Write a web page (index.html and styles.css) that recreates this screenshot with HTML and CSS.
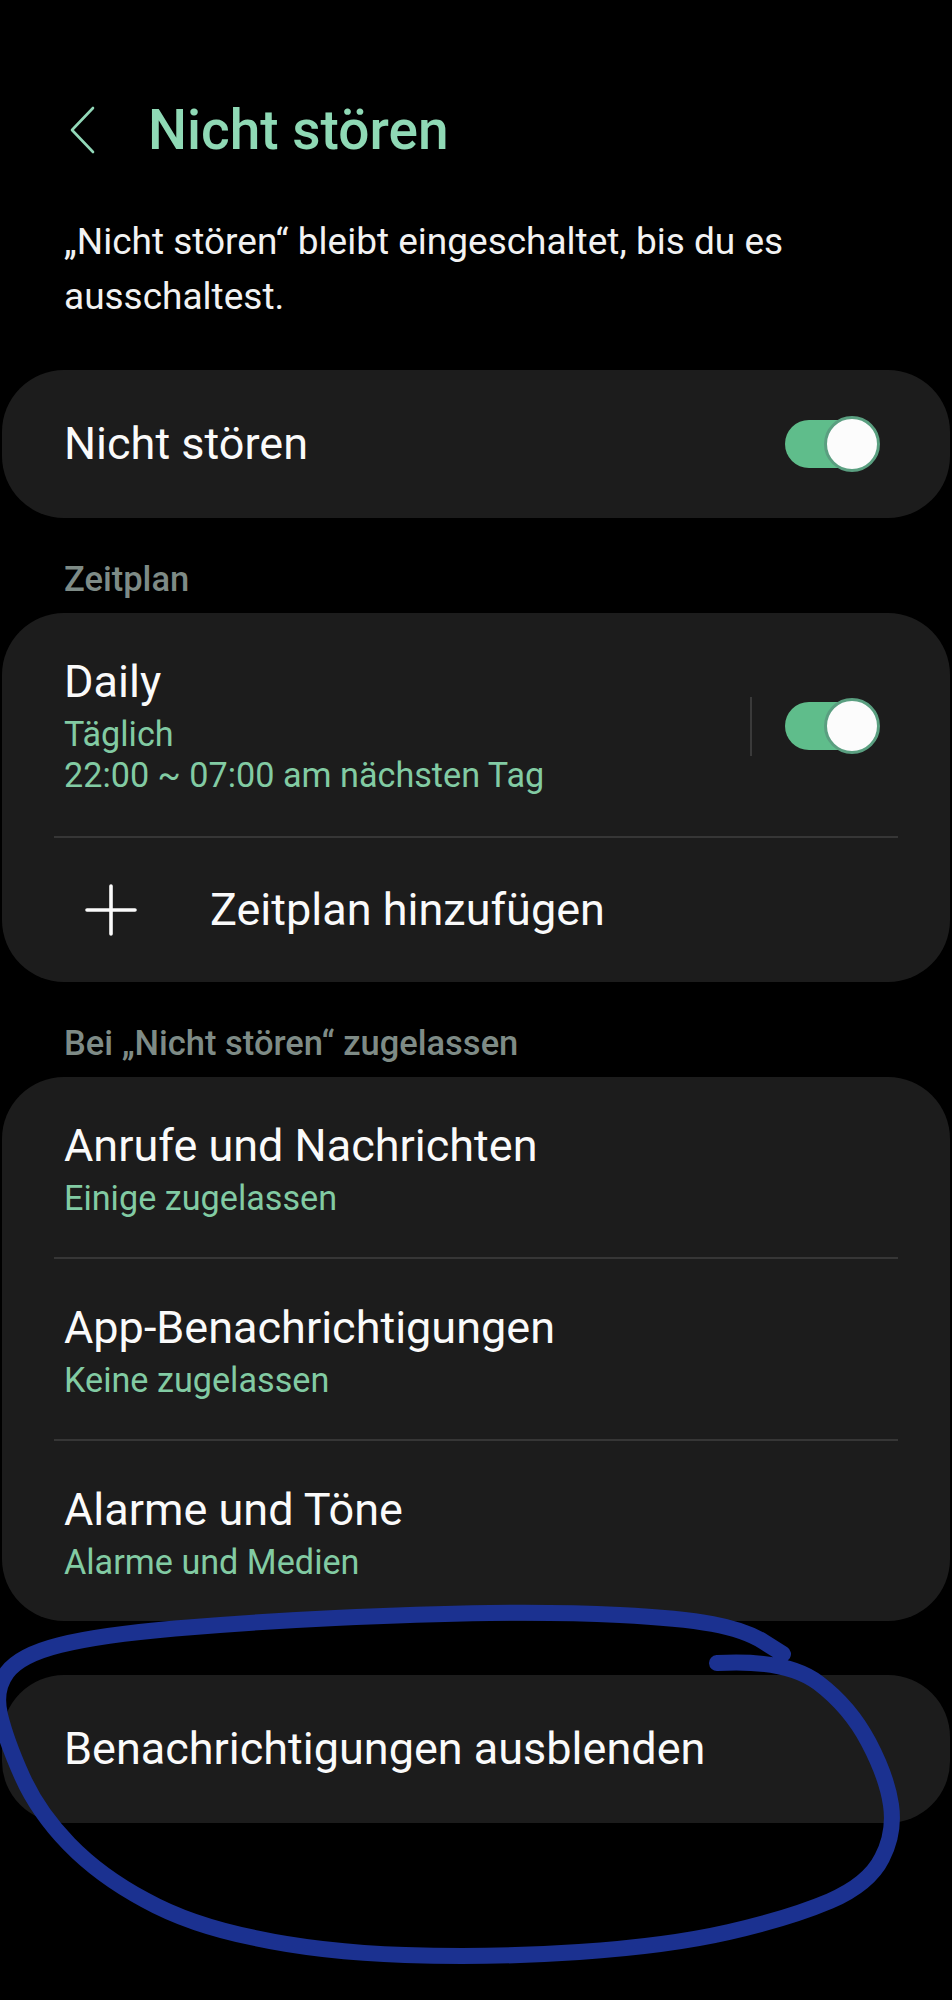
FILE: index.html
```html
<!DOCTYPE html>
<html lang="de">
<head>
  <meta charset="UTF-8">
  <meta name="viewport" content="width=device-width, initial-scale=1.0">
  <title>Nicht stören</title>
  <link rel="stylesheet" href="styles.css">
</head>
<body>
  <div class="screen">
    <header class="app-bar">
      <svg class="back" viewBox="0 0 26 48" width="26" height="48" aria-hidden="true">
        <path d="M24 2 L3 24 L24 46" fill="none" stroke="currentColor" stroke-width="2.6" stroke-linecap="round" stroke-linejoin="round"/>
      </svg>
      <h1>Nicht stören</h1>
    </header>

    <p class="intro">„Nicht stören“ bleibt eingeschaltet, bis du es ausschaltest.</p>

    <section class="card card-single">
      <span class="item-title">Nicht stören</span>
      <span class="switch"></span>
    </section>

    <h2 class="section-label">Zeitplan</h2>
    <section class="card">
      <div class="row row-schedule">
        <div class="row-text">
          <div class="item-title">Daily</div>
          <div class="item-sub">Täglich<br>22:00 ~ 07:00 am nächsten Tag</div>
        </div>
        <span class="vline"></span>
        <span class="switch"></span>
      </div>
      <div class="divider"></div>
      <div class="row row-add">
        <svg class="plus" viewBox="0 0 56 56" width="56" height="56" aria-hidden="true">
          <path d="M28 4 V52 M4 28 H52" fill="none" stroke="currentColor" stroke-width="3.6" stroke-linecap="round"/>
        </svg>
        <span class="item-title">Zeitplan hinzufügen</span>
      </div>
    </section>

    <h2 class="section-label">Bei „Nicht stören“ zugelassen</h2>
    <section class="card">
      <div class="row">
        <div class="row-text">
          <div class="item-title">Anrufe und Nachrichten</div>
          <div class="item-sub">Einige zugelassen</div>
        </div>
      </div>
      <div class="divider"></div>
      <div class="row">
        <div class="row-text">
          <div class="item-title">App-Benachrichtigungen</div>
          <div class="item-sub">Keine zugelassen</div>
        </div>
      </div>
      <div class="divider"></div>
      <div class="row">
        <div class="row-text">
          <div class="item-title">Alarme und Töne</div>
          <div class="item-sub">Alarme und Medien</div>
        </div>
      </div>
    </section>

    <section class="card card-single card-last">
      <span class="item-title">Benachrichtigungen ausblenden</span>
    </section>
  </div>

  <!-- hand-drawn marker loop on top of the screenshot -->
  <svg class="scribble" viewBox="0 0 952 2000" width="952" height="2000" aria-hidden="true">
    <path d="M717 1663 Q787 1659 818.5 1683 Q850 1707 868.5 1742 Q887 1777 891 1805 Q895 1833 882 1858 Q869 1884 830 1901 Q790 1918 729 1932 Q668 1946 579 1952 Q490 1958 405 1955 Q320 1952 255 1938 Q190 1925 145 1900 Q100 1876 69 1844 Q38 1812 22 1776 Q6 1740 0 1715 Q-6 1690 7 1672.5 Q20 1655 60 1645 Q100 1635 175 1628.5 Q250 1622 335 1618 Q420 1614 490 1613 Q560 1612 620 1615 Q680 1618 712.5 1624 Q745 1630 764 1642 L783 1654"
      fill="none" stroke="#1b3190" stroke-width="16" stroke-linecap="round" stroke-linejoin="round"/>
  </svg>
</body>
</html>
```

FILE: styles.css
```css
html {
  background: #000;
}

body {
  margin: 0;
  min-height: 2000px;
  background: #000;
  color: #fafafa;
  font-family: Roboto, "Noto Sans", sans-serif;
  position: relative;
}

.screen {
  padding: 90px 2px 0;
}

.app-bar {
  display: flex;
  align-items: center;
  height: 80px;
  padding-left: 67px;
  color: #8fd9b5;
}

.app-bar .back {
  color: #92d8b8;
  flex-shrink: 0;
}

.app-bar h1 {
  margin: 0 0 0 53px;
  font-size: 55px;
  font-weight: 500;
  line-height: 1;
  color: #8fd9b5;
}

.intro {
  margin: 44px 40px 46px 62px;
  font-size: 37px;
  line-height: 55px;
  color: #f2f2f2;
}

.card {
  background: #1c1c1c;
  border-radius: 62px;
}

.card-single {
  display: flex;
  align-items: center;
  justify-content: space-between;
  height: 148px;
  padding: 0 70px 0 62px;
}

.card-last {
  margin-top: 54px;
}

.section-label {
  margin: 41px 0 14px 62px;
  font-size: 34.5px;
  font-weight: 500;
  line-height: 40px;
  color: #7e8b86;
}

.item-title {
  font-size: 45px;
  line-height: 52px;
  color: #fafafa;
}

.item-sub {
  margin-top: 6px;
  font-size: 34.2px;
  line-height: 41px;
  color: #82cba3;
}

.row {
  display: flex;
  align-items: center;
  padding: 43px 70px 38px 62px;
}

.row-text {
  flex: 1;
}

.row-schedule {
  padding-bottom: 40px;
}

.vline {
  width: 2px;
  height: 59px;
  margin-right: 33px;
  background: #3a3a3a;
}

.row-add {
  height: 144px;
  padding: 0 0 0 81px;
  box-sizing: border-box;
}

.row-add .plus {
  color: #fafafa;
  margin-right: 71px;
}

.divider {
  height: 2px;
  margin: 0 52px;
  background: #363636;
}

.switch {
  position: relative;
  display: block;
  width: 95px;
  height: 56px;
  flex-shrink: 0;
}

.switch::before {
  content: "";
  position: absolute;
  left: 0;
  top: 4px;
  width: 88px;
  height: 48px;
  border-radius: 24px;
  background: #5fbd8b;
}

.switch::after {
  content: "";
  position: absolute;
  right: 0;
  top: 0;
  width: 50px;
  height: 50px;
  border-radius: 50%;
  background: #fcfcfc;
  border: 3px solid #5a9f80;
}

.scribble {
  position: absolute;
  left: 0;
  top: 0;
  pointer-events: none;
}
```
